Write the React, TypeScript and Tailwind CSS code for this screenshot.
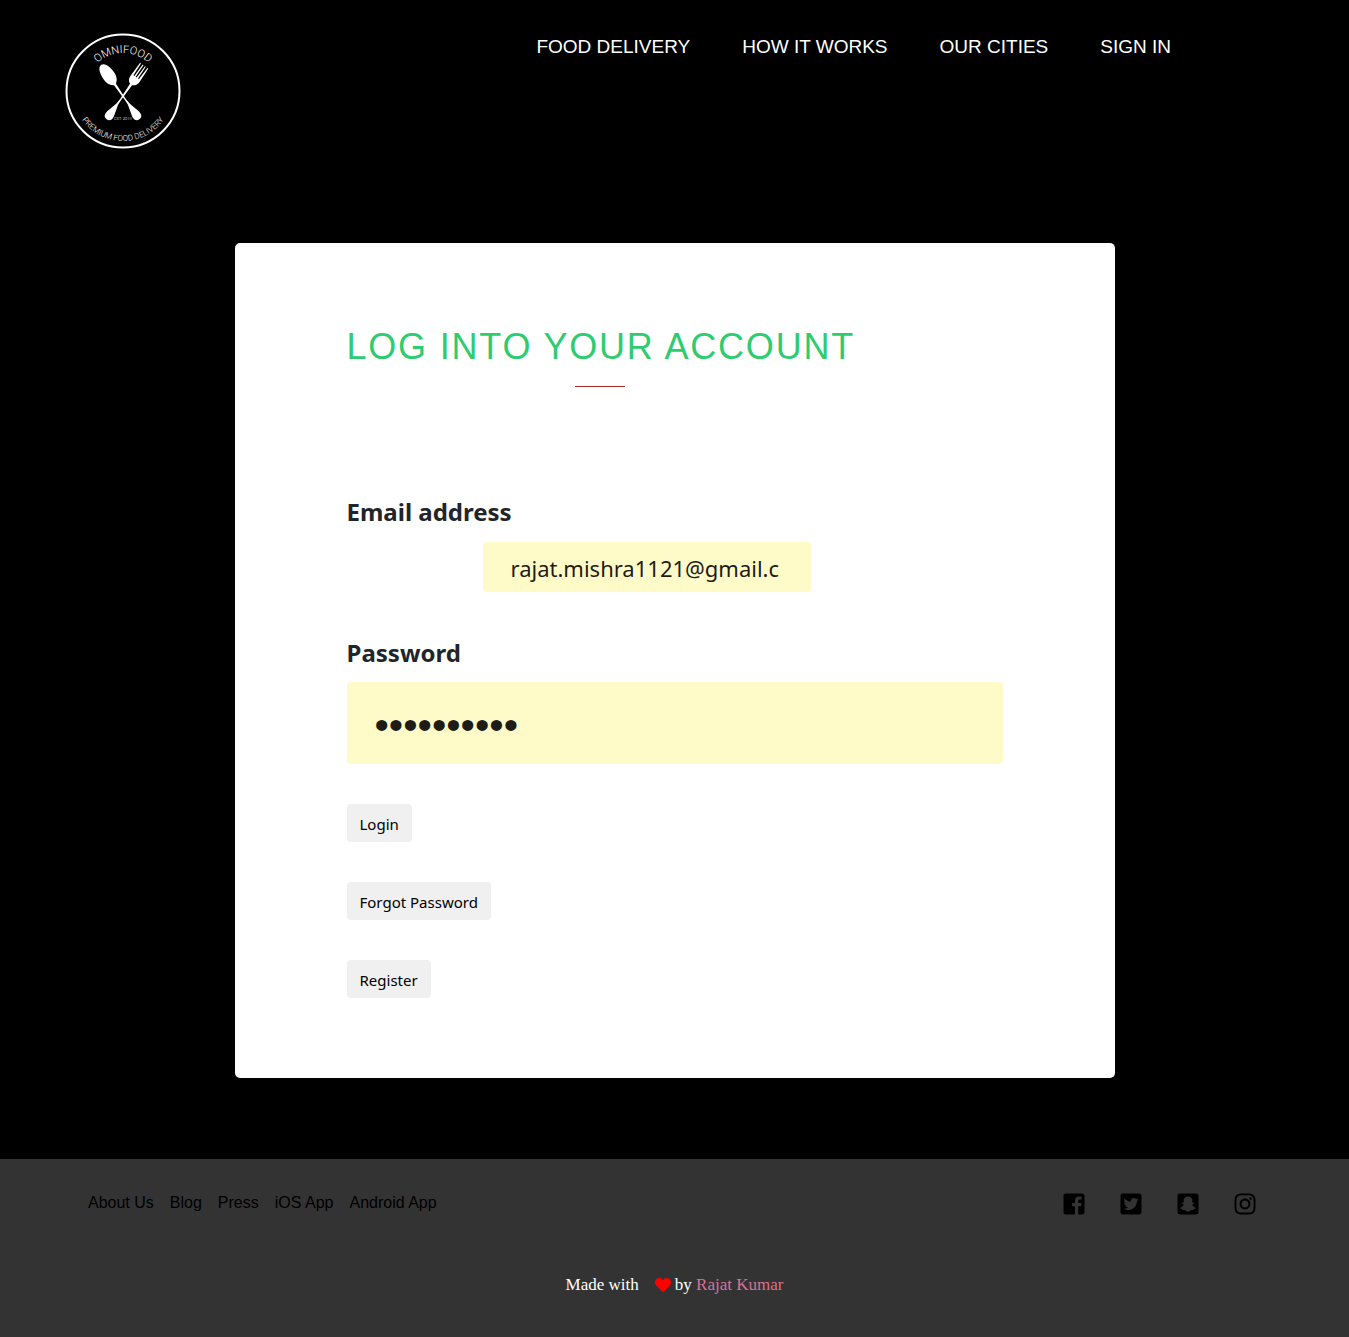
import { FaHeart, FaInstagram, FaSnapchatSquare, FaTwitterSquare } from "react-icons/fa";

function FacebookSquare({ className }: { className?: string }) {
  return (
    <svg viewBox="0 0 448 512" fill="currentColor" className={className} aria-hidden="true">
      <path d="M448 80v352c0 26.5-21.5 48-48 48h-85.3V302.8h60.6l8.7-67.6h-69.3V192c0-19.6 5.4-32.9 33.5-32.9H384V98.7c-6.2-.8-27.4-2.7-52.2-2.7-51.6 0-87 31.5-87 89.4v49.9H184v67.6h60.9V480H48c-26.5 0-48-21.5-48-48V80c0-26.5 21.5-48 48-48h352c26.5 0 48 21.5 48 48z" />
    </svg>
  );
}

const navLinks = ["Food delivery", "How it works", "Our cities", "Sign in"];
const footerLinks = ["About Us", "Blog", "Press", "iOS App", "Android App"];
const socials = [
  { name: "Facebook", Icon: FacebookSquare },
  { name: "Twitter", Icon: FaTwitterSquare },
  { name: "Snapchat", Icon: FaSnapchatSquare },
  { name: "Instagram", Icon: FaInstagram },
];

function Logo() {
  return (
    <svg viewBox="0 0 116 116" className="size-[116px]" role="img" aria-label="Omnifood premium food delivery">
      <defs>
        <path id="arc-top" d="M20 58A38 38 0 0 1 96 58" />
        <path id="arc-bottom" d="M8 58A50 50 0 0 0 108 58" />
      </defs>
      <circle cx="58" cy="58" r="56.5" fill="none" stroke="#fff" strokeWidth="2" />
      <g fill="#fff">
        <g transform="translate(58 63) rotate(-35)">
          <path d="M0-38C4.5-38 6.5-31 6.3-24C6.1-18 3.5-16 1.2-14L.7 4 1 10 4.2 22Q5 28.500 0 28.500T-4.200 22L-1 10-.7 4-1.200-14C-3.500-16-6.100-18-6.300-24C-6.500-31-4.500-38 0-38Z" />
        </g>
        <g transform="translate(58 63) rotate(35)">
          <path d="M-5-37L-5.500-21Q-5.500-16-1.200-14L-.7 4-1 10-4.200 22Q-5 28.500 0 28.500T4.200 22L1 10 .7 4 1.200-14Q5.500-16 5.500-21L5-37H4L3.300-23H2.200L1.900-37H.9L.6-23H-.6L-.9-37H-1.900L-2.200-23H-3.300L-4-37Z" />
        </g>
      </g>
      <g fill="#fff" fontFamily="Roboto, sans-serif" fontWeight="300" textAnchor="middle">
        <text fontSize="11">
          <textPath href="#arc-top" startOffset="50%">OMNIFOOD</textPath>
        </text>
        <text fontSize="8">
          <textPath href="#arc-bottom" startOffset="50%">PREMIUM FOOD DELIVERY</textPath>
        </text>
        <text x="58" y="87" fontSize="4">EST. 2014</text>
      </g>
    </svg>
  );
}

function ActionButton({ label, type = "button" }: { label: string; type?: "button" | "submit" }) {
  return (
    <button type={type} className="h-[38px] rounded bg-[#f0f0f0] px-[13px] pt-0.5 text-[15px] text-black">
      {label}
    </button>
  );
}

export default function App() {
  return (
    <div className="flex min-h-screen flex-col bg-black font-['Liberation_Sans',Arial,sans-serif]">
      <header className="flex items-start justify-between pr-[178px] pl-[65px]">
        <a href="#" className="mt-[33px] block">
          <Logo />
        </a>
        <nav className="mt-[33px] flex gap-[52px] text-[19px] leading-7 text-white uppercase">
          {navLinks.map((label) => (
            <a key={label} href="#">{label}</a>
          ))}
        </nav>
      </header>

      <main className="mx-auto mt-[94px] mb-[81px] w-full max-w-[880px] rounded-[5px] bg-white px-28 py-20">
        <h1 className="text-4xl leading-[48px] tracking-wider text-[#2ecc71] uppercase">Log into your account</h1>
        <hr className="mt-[15px] ml-[228px] w-[50px] border-t border-[#a52a2a]" />

        <form className="mt-[105px] font-['Noto_Sans',sans-serif]" onSubmit={(e) => e.preventDefault()}>
          <label htmlFor="email" className="block text-2xl leading-10 font-bold text-[#212529]">
            Email address
          </label>
          <input
            id="email"
            type="email"
            defaultValue="rajat.mishra1121@gmail.c"
            className="mt-[10px] ml-[136px] block h-[50px] w-1/2 rounded bg-[#fffbc8] px-7 pt-0.5 text-[22px] text-[#1e1c16]"
          />
          <label htmlFor="password" className="mt-[41px] block text-2xl leading-10 font-bold text-[#212529]">
            Password
          </label>
          <input
            id="password"
            type="password"
            defaultValue="omnifood12"
            className="mt-[9px] block h-[82px] w-full rounded bg-[#fffbc8] px-7 pt-1 font-['Liberation_Sans',Arial,sans-serif] text-[41px] text-[#1e1c16]"
          />
          <div className="mt-10 flex flex-col items-start gap-10">
            <ActionButton label="Login" type="submit" />
            <ActionButton label="Forgot Password" />
            <ActionButton label="Register" />
          </div>
        </form>
      </main>

      <footer className="grow bg-[#333] pb-10">
        <div className="flex justify-between pt-8 pr-[92px] pl-[88px] text-black">
          <ul className="flex gap-4 text-base leading-6">
            {footerLinks.map((label) => (
              <li key={label}>
                <a href="#">{label}</a>
              </li>
            ))}
          </ul>
          <ul className="flex gap-[33px] pt-px">
            {socials.map(({ name, Icon }) => (
              <li key={name}>
                <a href="#" aria-label={name}>
                  <Icon className="size-6" />
                </a>
              </li>
            ))}
          </ul>
        </div>
        <p className="mt-[57px] flex items-center justify-center font-['Liberation_Serif',serif] text-[17px] leading-6 text-white">
          Made with
          <FaHeart className="mr-1 ml-4 size-4 text-[#f00]" />
          by&nbsp;
          <a href="#" className="text-[#db7093]">Rajat Kumar</a>
        </p>
      </footer>
    </div>
  );
}
